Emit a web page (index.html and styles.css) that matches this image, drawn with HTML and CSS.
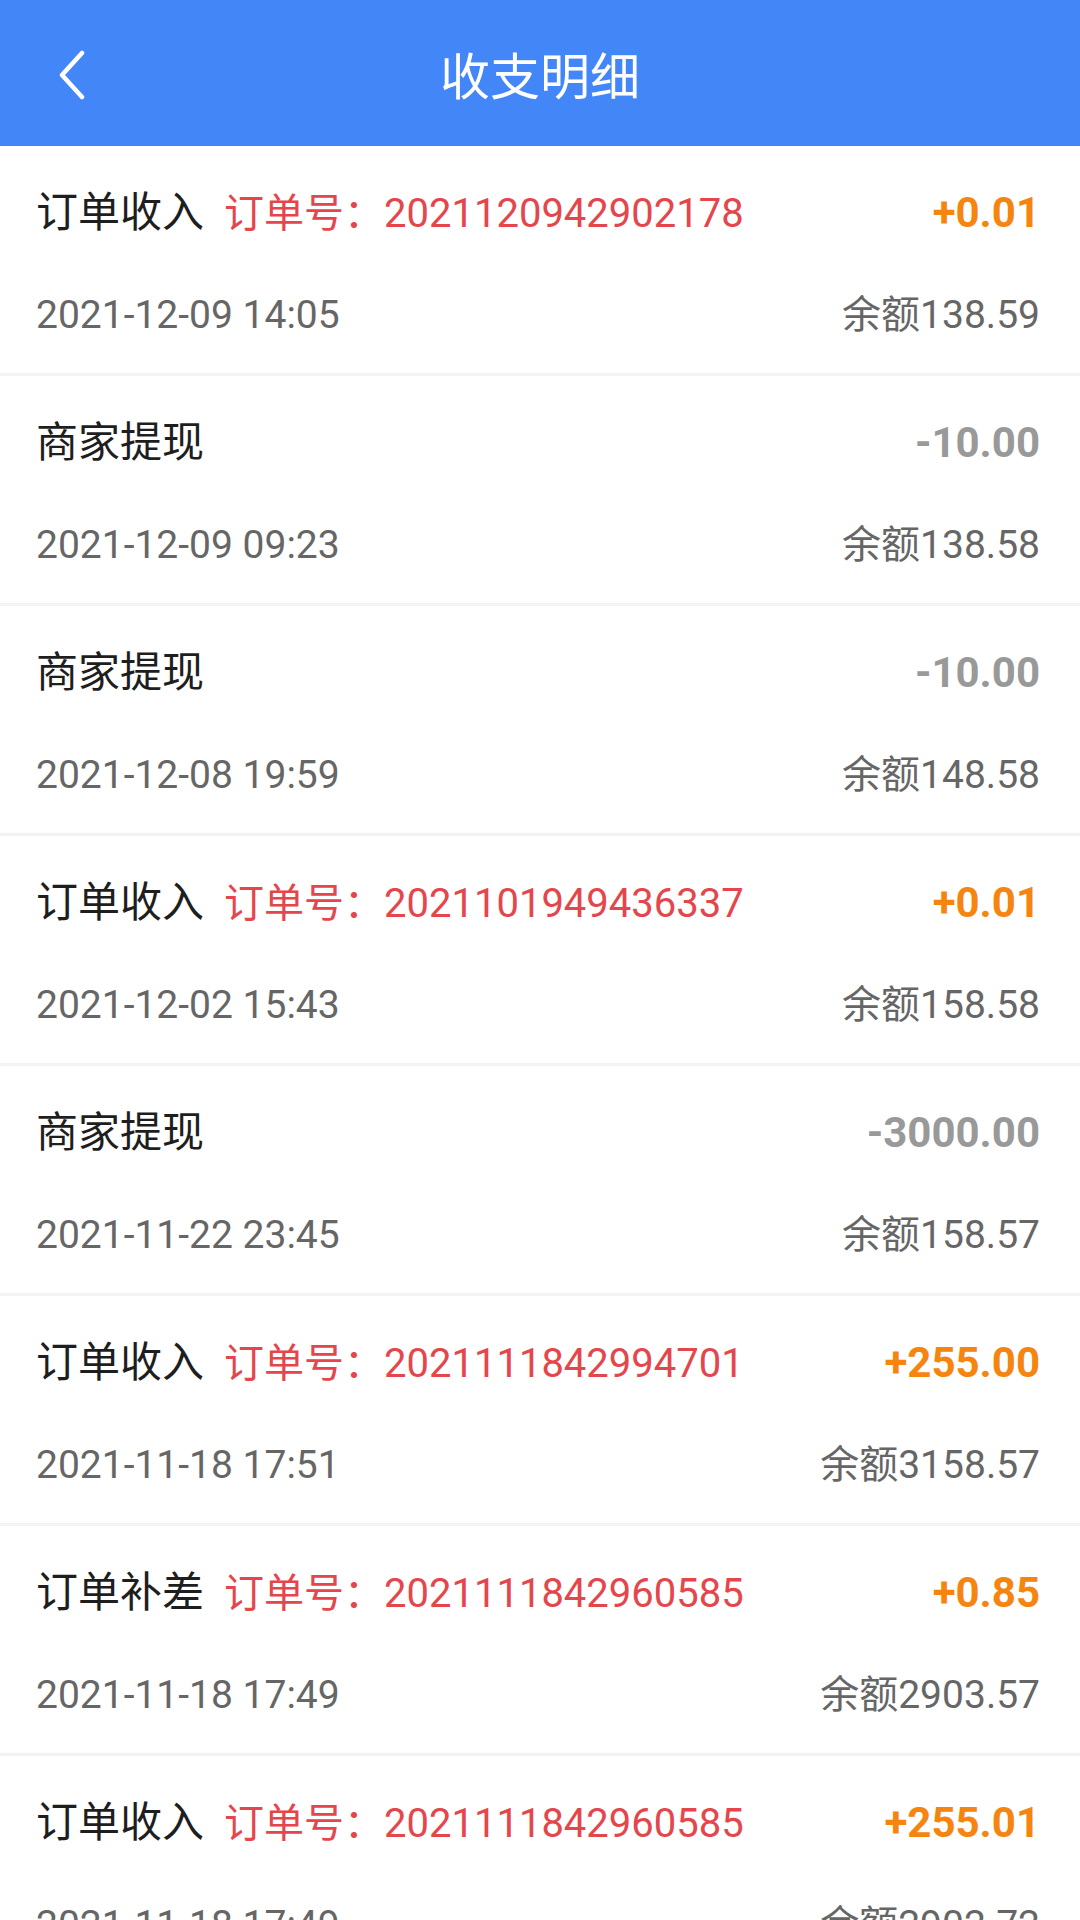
FILE: index.html
```html
<!DOCTYPE html>
<html lang="zh-CN">
<head>
    <meta charset="UTF-8">
    <meta name="viewport" content="width=device-width, initial-scale=1.0">
    <title>收支明细</title>
    <link rel="stylesheet" href="styles.css">
</head>
<body>

    <div class="header">
        <a href="#" class="back-btn">
            <svg width="28" height="50" viewBox="0 0 28 50">
                <polyline points="24,3 4,25 24,47" fill="none" stroke="#fff" stroke-width="4.5" stroke-linecap="round" stroke-linejoin="round"/>
            </svg>
        </a>
        <h1>收支明细</h1>
        <div></div>
    </div>

    <div class="record-list">
        <div class="record">
            <div class="record-line">
                <div class="record-title">订单收入<span class="order-no">订单号：2021120942902178</span></div>
                <div class="amount income">+0.01</div>
            </div>
            <div class="record-line">
                <div class="record-date">2021-12-09 14:05</div>
                <div class="balance">余额138.59</div>
            </div>
        </div>

        <div class="record">
            <div class="record-line">
                <div class="record-title">商家提现</div>
                <div class="amount expense">-10.00</div>
            </div>
            <div class="record-line">
                <div class="record-date">2021-12-09 09:23</div>
                <div class="balance">余额138.58</div>
            </div>
        </div>

        <div class="record">
            <div class="record-line">
                <div class="record-title">商家提现</div>
                <div class="amount expense">-10.00</div>
            </div>
            <div class="record-line">
                <div class="record-date">2021-12-08 19:59</div>
                <div class="balance">余额148.58</div>
            </div>
        </div>

        <div class="record">
            <div class="record-line">
                <div class="record-title">订单收入<span class="order-no">订单号：2021101949436337</span></div>
                <div class="amount income">+0.01</div>
            </div>
            <div class="record-line">
                <div class="record-date">2021-12-02 15:43</div>
                <div class="balance">余额158.58</div>
            </div>
        </div>

        <div class="record">
            <div class="record-line">
                <div class="record-title">商家提现</div>
                <div class="amount expense">-3000.00</div>
            </div>
            <div class="record-line">
                <div class="record-date">2021-11-22 23:45</div>
                <div class="balance">余额158.57</div>
            </div>
        </div>

        <div class="record">
            <div class="record-line">
                <div class="record-title">订单收入<span class="order-no">订单号：2021111842994701</span></div>
                <div class="amount income">+255.00</div>
            </div>
            <div class="record-line">
                <div class="record-date">2021-11-18 17:51</div>
                <div class="balance">余额3158.57</div>
            </div>
        </div>

        <div class="record">
            <div class="record-line">
                <div class="record-title">订单补差<span class="order-no">订单号：2021111842960585</span></div>
                <div class="amount income">+0.85</div>
            </div>
            <div class="record-line">
                <div class="record-date">2021-11-18 17:49</div>
                <div class="balance">余额2903.57</div>
            </div>
        </div>

        <div class="record">
            <div class="record-line">
                <div class="record-title">订单收入<span class="order-no">订单号：2021111842960585</span></div>
                <div class="amount income">+255.01</div>
            </div>
            <div class="record-line">
                <div class="record-date">2021-11-18 17:49</div>
                <div class="balance">余额2902.72</div>
            </div>
        </div>
    </div>

</body>
</html>
```

FILE: styles.css
```css
body {
    font-family: Roboto, "Noto Sans CJK SC", sans-serif;
    margin: 0;
    padding: 0;
    background-color: #f3f3f5;
    overflow: hidden;
}

.header {
    background-color: #4286f8;
    height: 146px;
    display: grid;
    grid-template-columns: 1fr auto 1fr;
    align-items: center;
}

.back-btn {
    display: flex;
    align-items: center;
    padding-left: 58px;
    padding-top: 4px;
}

.header h1 {
    margin: 0;
    color: white;
    font-size: 50px;
    font-weight: normal;
    line-height: 60px;
    padding-top: 10px;
}

.record {
    background-color: white;
    height: 227px;
    box-sizing: border-box;
    padding: 37px 40px 0 36px;
    margin-bottom: 3px;
    display: flex;
    flex-direction: column;
    gap: 42px;
}

.record-line {
    display: flex;
    justify-content: space-between;
    align-items: baseline;
    height: 60px;
    line-height: 60px;
}

.record-title {
    font-size: 42px;
    color: #1e1e1e;
}

.order-no {
    font-size: 40px;
    color: #e4464b;
    margin-left: 20px;
}

.amount {
    font-size: 42px;
    font-weight: bold;
}

.income {
    color: #f5850f;
}

.expense {
    color: #999999;
}

.record-date {
    font-size: 39px;
    color: #666666;
}

.balance {
    font-size: 39px;
    color: #666666;
}
```
